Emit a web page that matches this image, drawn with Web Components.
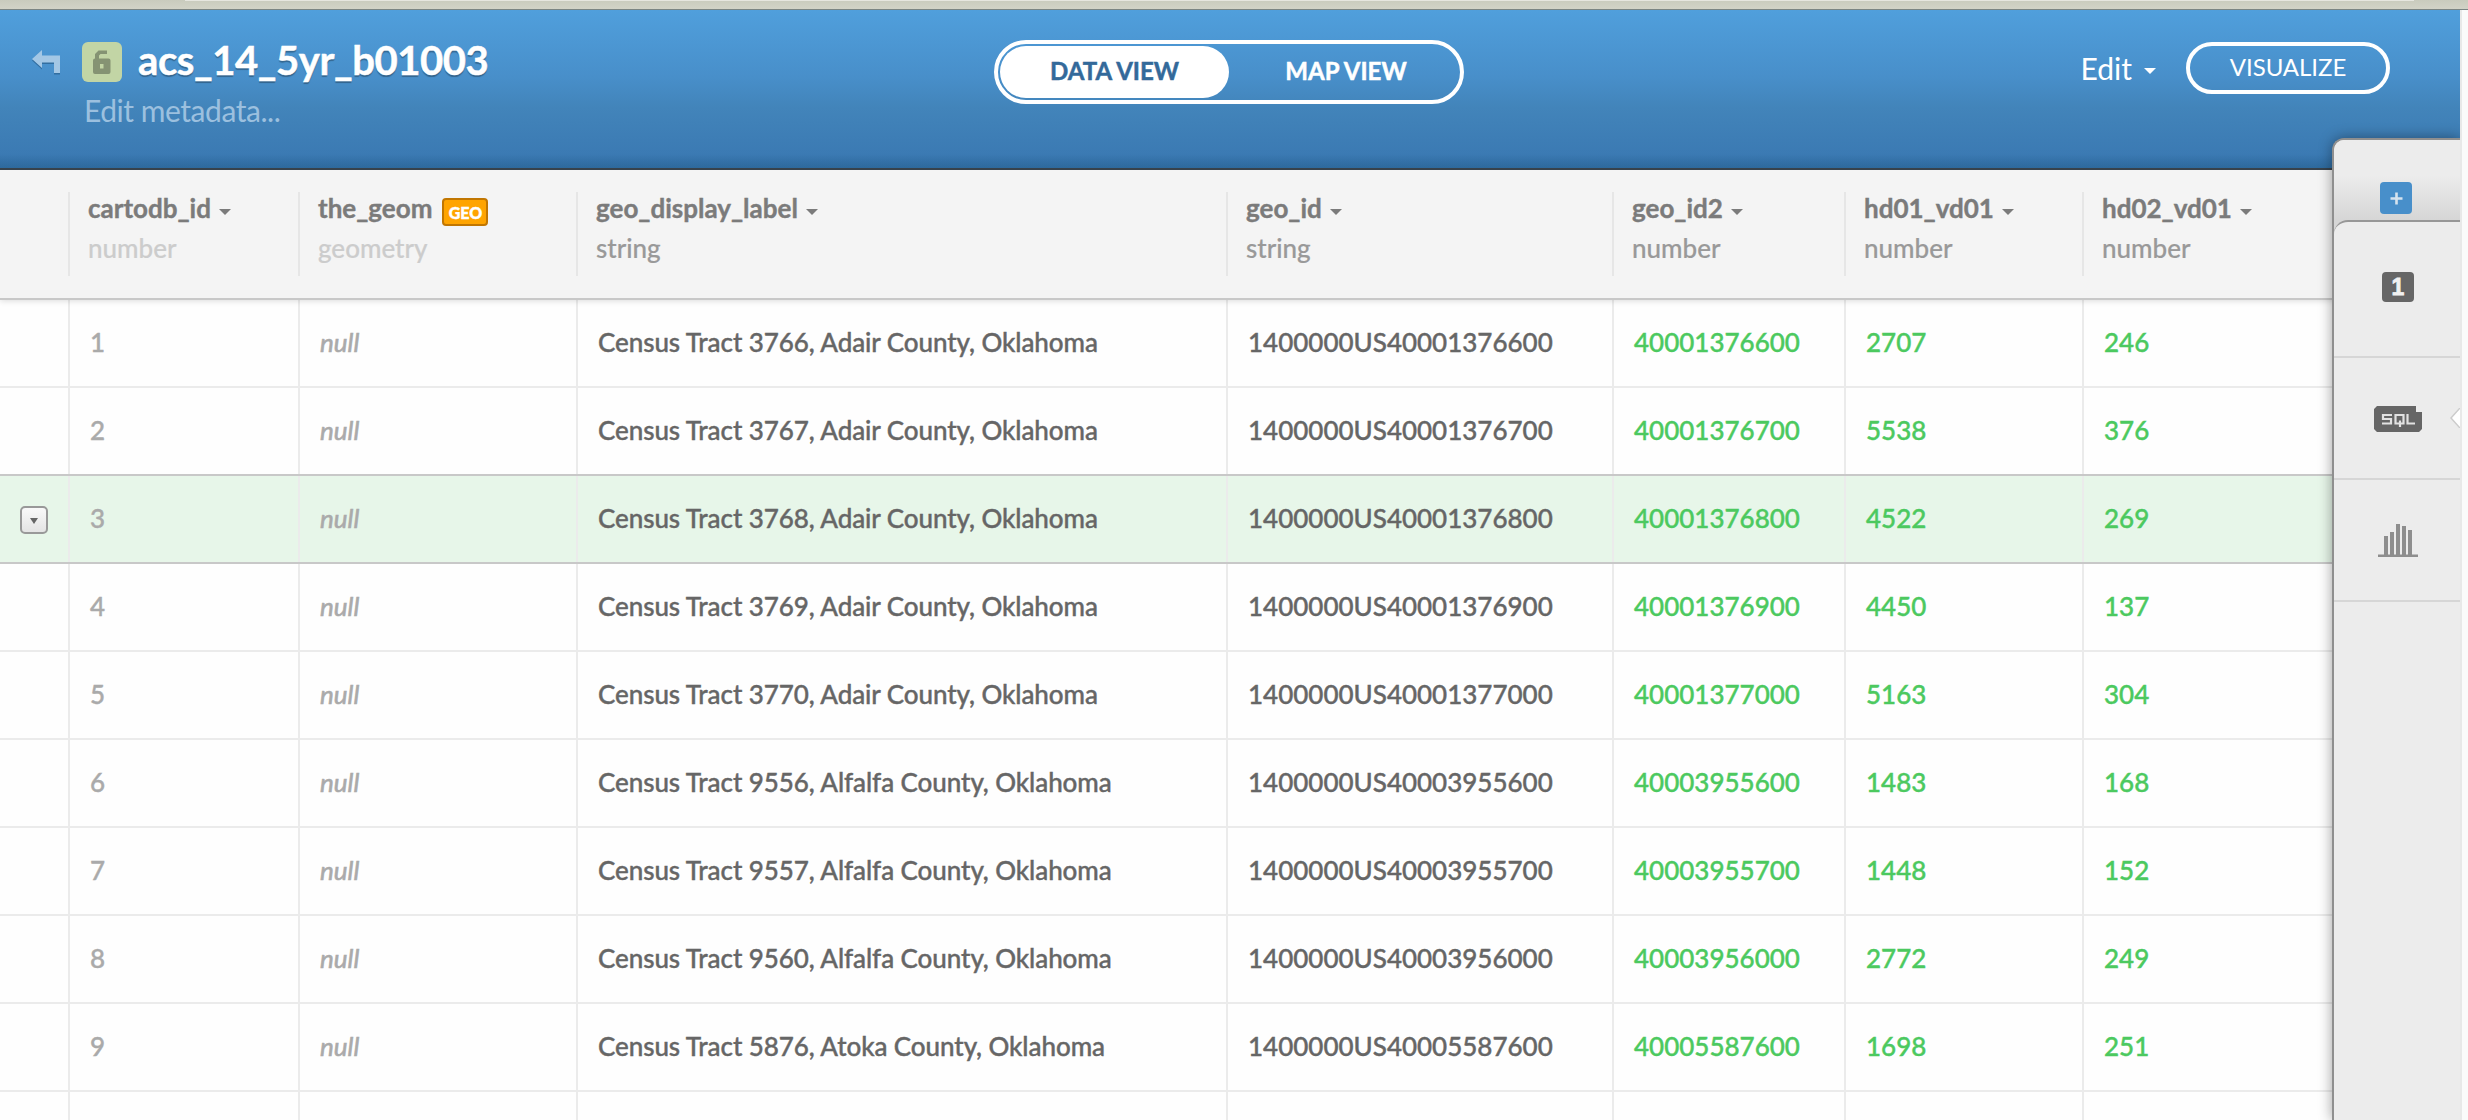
<!DOCTYPE html>
<html lang="en">
<head>
<meta charset="utf-8">
<title>acs_14_5yr_b01003</title>
<style>
html, body { margin: 0; height: 100%; }
body { font-family: Lato, "Open Sans", sans-serif; background: #fff; overflow: hidden; }
</style>
</head>
<body>
<dataset-app></dataset-app>
<script>
const define = (name, html, setup) => customElements.define(name, class extends HTMLElement {
  connectedCallback() {
    if (this.shadowRoot) return;
    const root = this.attachShadow({ mode: 'open' });
    root.innerHTML = typeof html === 'function' ? html(this) : html;
    if (setup) setup(this, root);
  }
});

const COLUMNS = [
  { name: 'cartodb_id', type: 'number', system: true, menu: true },
  { name: 'the_geom', type: 'geometry', system: true, geo: true },
  { name: 'geo_display_label', type: 'string', menu: true },
  { name: 'geo_id', type: 'string', menu: true },
  { name: 'geo_id2', type: 'number', menu: true },
  { name: 'hd01_vd01', type: 'number', menu: true },
  { name: 'hd02_vd01', type: 'number', menu: true }
];
const ROWS = [
  [1, 'null', 'Census Tract 3766, Adair County, Oklahoma', '1400000US40001376600', 40001376600, 2707, 246],
  [2, 'null', 'Census Tract 3767, Adair County, Oklahoma', '1400000US40001376700', 40001376700, 5538, 376],
  [3, 'null', 'Census Tract 3768, Adair County, Oklahoma', '1400000US40001376800', 40001376800, 4522, 269],
  [4, 'null', 'Census Tract 3769, Adair County, Oklahoma', '1400000US40001376900', 40001376900, 4450, 137],
  [5, 'null', 'Census Tract 3770, Adair County, Oklahoma', '1400000US40001377000', 40001377000, 5163, 304],
  [6, 'null', 'Census Tract 9556, Alfalfa County, Oklahoma', '1400000US40003955600', 40003955600, 1483, 168],
  [7, 'null', 'Census Tract 9557, Alfalfa County, Oklahoma', '1400000US40003955700', 40003955700, 1448, 152],
  [8, 'null', 'Census Tract 9560, Alfalfa County, Oklahoma', '1400000US40003956000', 40003956000, 2772, 249],
  [9, 'null', 'Census Tract 5876, Atoka County, Oklahoma', '1400000US40005587600', 40005587600, 1698, 251]
];

define('window-strip', `
<style>
:host { display: block; flex: none; height: 9px; background: linear-gradient(#c9cbbd, #d2d3c7); border-bottom: 1px solid #7b8583; }
i { display: block; height: 1px; margin: 0 54px 0 185px; background: #e6e6df; }
</style><i></i>`);

define('caret-down', `
<style>
:host { display: inline-block; width: 12px; height: 6px; }
svg { display: block; width: 100%; height: 100%; }
</style>
<svg viewBox="0 0 12 6" preserveAspectRatio="none"><path d="M0 0h12L6 6z" fill="currentColor"/></svg>`);

define('dataset-title', `
<style>
:host { display: flex; box-sizing: border-box; padding: 26px 0 0 32px; }
.back { flex: none; width: 30px; height: 30px; margin: 13px 20px 0 0; }
.lock { box-sizing: border-box; display: flex; justify-content: center; width: 40px; height: 40px; padding-top: 8px; margin-top: 6px; border-radius: 6px; background: #c2d5a5; }
.row { display: flex; height: 56px; }
h1 { margin: 0 0 0 16px; font: 700 40px/49px Lato, sans-serif; letter-spacing: -.42px; color: #fff; text-shadow: 0 2px 1px rgba(0,0,0,.3); -webkit-text-stroke: .5px #fff; }
p { margin: 0 0 0 2px; font-size: 30px; font-weight: 400; line-height: 36px; letter-spacing: -.46px; color: #9cc0df; }
</style>
<svg class="back" viewBox="0 0 30 30"><path d="M0 10 10 1v5.500h18V24h-6V13.500H10V19z" transform="translate(0 1.500)" fill="#28608f" opacity=".7"/><path d="M0 10 10 1v5.500h18V24h-6V13.500H10V19z" fill="#a3c7e5"/></svg>
<div>
  <div class="row">
    <span class="lock"><svg width="20" height="25" viewBox="0 0 20 25"><path d="M1 10.500a2 2 0 0 1 2-2V4L6.500 .5H15V4H8.500L7 5.500v3h9.500a2 2 0 0 1 2 2V22a2 2 0 0 1-2 2H3a2 2 0 0 1-2-2zM8 14v4.500h3.500V14z" fill="#859373" fill-rule="evenodd"/></svg></span>
    <h1>acs_14_5yr_b01003</h1>
  </div>
  <p>Edit metadata...</p>
</div>`);

define('view-toggle', `
<style>
:host { display: flex; box-sizing: border-box; height: 64px; padding: 2px; border: 4px solid #fff; border-radius: 32px; }
::slotted(*) { flex: 1; border-radius: 26px; text-align: center; text-indent: 5px; font-size: 24px; font-weight: 700; line-height: 50px; color: #fff; -webkit-text-stroke: .5px; }
::slotted([selected]) { background: #fff; color: #33699a; text-indent: 0; }
</style><slot></slot>`);

define('header-actions', `
<style>
:host { display: flex; justify-content: flex-end; box-sizing: border-box; padding: 32px 70px 0 0; color: #fff; }
.edit { display: flex; font-size: 30px; line-height: 36px; padding-top: 8px; }
.edit caret-down { margin: 18px 0 0 12px; }
.pill { box-sizing: border-box; width: 204px; height: 52px; margin-left: 30px; border: 4px solid #fff; border-radius: 26px; text-align: center; font-size: 24px; line-height: 42px; letter-spacing: -.05px; }
</style>
<span class="edit">Edit<caret-down></caret-down></span>
<span class="pill">VISUALIZE</span>`);

define('app-header', `
<style>
:host { display: grid; grid-template-columns: 994px 470px 1fr; flex: none; box-sizing: border-box; width: 2460px; height: 160px; border-bottom: 2px solid #37424c;
  background: linear-gradient(transparent 144px, rgba(36,94,140,.55)), linear-gradient(#509fdc, #488fca 42%, #4284ba 62%, #3977b1); }
view-toggle { margin-top: 30px; }
</style>
<dataset-title></dataset-title>
<view-toggle><span selected>DATA VIEW</span><span>MAP VIEW</span></view-toggle>
<header-actions></header-actions>`);

define('column-head', el => `
<style>
:host { display: block; height: 84px; box-sizing: border-box; padding-left: 18px; border-left: 2px solid #e6e6e6; font-size: 26px; line-height: 32px; white-space: nowrap; }
.name { display: flex; align-items: flex-start; height: 32px; color: #7b7b7b; font-weight: 700; -webkit-text-stroke: .4px; }
.type { margin-top: 8px; color: #999; font-weight: 500; -webkit-text-stroke: .2px; }
:host([system]) .type { color: #ccc; }
caret-down { margin: 17px 0 0 8px; }
b { box-sizing: border-box; width: 46px; height: 28px; margin: 6px 0 0 10px; border: 2px solid #c17600; border-radius: 4px; background: #ffa400; color: #fff; font-size: 16px; line-height: 25px; text-align: center; }
</style>
<div class="name"><span>${el.getAttribute('name')}</span>${el.hasAttribute('menu') ? '<caret-down></caret-down>' : ''}${el.hasAttribute('geo') ? '<b>GEO</b>' : ''}</div>
<div class="type">${el.getAttribute('type')}</div>`);

const TRACKS = '68px 230px 278px 650px 386px 232px 238px 1fr';

define('table-head', () => `
<style>
:host { display: grid; grid-template-columns: ${TRACKS}; flex: none; box-sizing: border-box; height: 130px; padding-top: 22px; background: #f4f4f4; border-bottom: 2px solid #c8c8c8; box-shadow: 0 1px 6px rgba(0,0,0,.14); position: relative; }
</style><span></span>` + COLUMNS.map(c => `<column-head name="${c.name}" type="${c.type}" ${c.system ? 'system' : ''} ${c.menu ? 'menu' : ''} ${c.geo ? 'geo' : ''}></column-head>`).join(''));

define('row-menu', `
<style>
:host { display: flex; align-items: center; justify-content: center; box-sizing: border-box; width: 28px; height: 28px; border: 2px solid #999; border-radius: 5px; background: linear-gradient(#f9f9f9, #e4e4e4); color: #666; }
caret-down { width: 8px; margin-top: 1px; }
</style><caret-down></caret-down>`);

define('data-row', el => `
<style>
:host { display: grid; grid-template-columns: ${TRACKS}; flex: none; box-sizing: border-box; height: 88px; border-bottom: 2px solid #ebebeb; font-size: 26px; font-weight: 500; line-height: 32px; color: #666; white-space: nowrap; -webkit-text-stroke: .4px; }
:host([before]) { border-color: #c8c8c8; }
:host([active]) { background: #e7f6e9; border-color: #c8c8c8; }
div { padding: 26px 0 0 20px; border-left: 2px solid #ebebeb; }
.sys { color: #aaa; }
.geom { font-style: italic; font-weight: 400; -webkit-text-stroke: .6px; }
.txt { letter-spacing: -.07px; }
.num { color: #4cc95f; }
row-menu { margin: 30px 0 0 20px; }
</style>
<span>${el.hasAttribute('active') ? '<row-menu></row-menu>' : ''}</span>` + COLUMNS.map((c, i) => {
  const row = ROWS[el.dataset.index];
  const cls = i === 0 ? 'sys' : i === 1 ? 'sys geom' : i === 2 ? 'txt' : i > 3 ? 'num' : '';
  return `<div class="${cls}">${row ? row[i] : ''}</div>`;
}).join(''));

define('data-table', () => `
<style>
:host { display: flex; flex-direction: column; width: 2460px; flex: 1; min-height: 0; overflow: hidden; background: #fefefe; }
</style>
<table-head></table-head>` + [...ROWS, null].map((r, i) => `<data-row data-index="${i}" ${i === 1 ? 'before' : ''} ${i === 2 ? 'active' : ''}></data-row>`).join(''));

define('rail-item', `
<style>
:host { display: flex; align-items: center; justify-content: center; position: relative; box-sizing: border-box; height: 122px; padding-left: 36px; padding-right: 34px; border-bottom: 2px solid #d6d6d6; }
</style><slot></slot>`);

define('layer-rail', `
<style>
:host { display: flex; flex-direction: column; position: absolute; left: 2332px; top: 138px; bottom: 0; width: 128px; box-sizing: border-box; border: 2px solid #8f8f8f; border-right: 0; border-bottom: 0; border-radius: 12px 0 0 0; background: #ececec; box-shadow: 0 0 14px rgba(0,0,0,.38); clip-path: inset(-20px 0 0 -20px); }
.add { display: flex; flex: none; box-sizing: border-box; height: 90px; padding: 42px 0 0 46px; background: linear-gradient(#ececec 36px, #d6d6d6 80px); border-radius: 10px 0 0 0; }
.stack { flex: 1; margin-top: -10px; border-top: 2px solid #979797; border-radius: 14px 0 0 0; background: #ececec; }
.one { width: 32px; height: 30px; border-radius: 4px; background: #666; color: #f1f1f1; font: 700 23px/31px "Liberation Sans", sans-serif; text-align: center; -webkit-text-stroke: .8px; }
rail-item:first-child { height: 136px; padding-bottom: 4px; }
.notch { position: absolute; right: 0; top: 50px; }
.sql { margin-top: 2px; }
svg { display: block; }
</style>
<div class="add"><svg width="32" height="32" viewBox="0 0 32 32"><rect width="32" height="32" rx="4" fill="#488fca"/><path d="M10.500 16.500h12M16.500 10.500v12" stroke="#d6e3ee" stroke-width="2.600"/></svg></div>
<div class="stack">
  <rail-item><span class="one">1</span></rail-item>
  <rail-item>
    <svg class="sql" width="48" height="26" viewBox="0 0 48 26"><path d="M3 0h39v6h6v17l-3 3H3l-3-3V3z" fill="#666"/><path d="M18 9H9v4h8v4.500H8M29.500 17.500h-8V9h8zM26 14.500V21M33.500 8v9.500H41" fill="none" stroke="#e2e2e2" stroke-width="2.200"/></svg>
    <svg class="notch" width="10" height="20" viewBox="0 0 10 20"><path d="M10 0 1 10l9 10" fill="#fff" stroke="#ccc" stroke-width="1.500"/></svg>
  </rail-item>
  <rail-item><svg width="40" height="33" viewBox="0 0 40 33"><path d="M0 30.500h40v2.500H0zM6 12h4v19H6zM12 8h4v23h-4zM18 0h4v31h-4zM24 2h4v29h-4zM30 6h4v25h-4z" fill="#8e8e8e"/></svg></rail-item>
</div>`);

define('dataset-app', `
<style>
:host { display: flex; flex-direction: column; position: relative; height: 1120px; width: 2468px; overflow: hidden; background: linear-gradient(90deg, #e8e8e8 2460px, #e8e8e8 2462px, #fafafa 2462px); }
</style>
<window-strip></window-strip>
<app-header></app-header>
<data-table></data-table>
<layer-rail></layer-rail>`);
</script>
</body>
</html>
